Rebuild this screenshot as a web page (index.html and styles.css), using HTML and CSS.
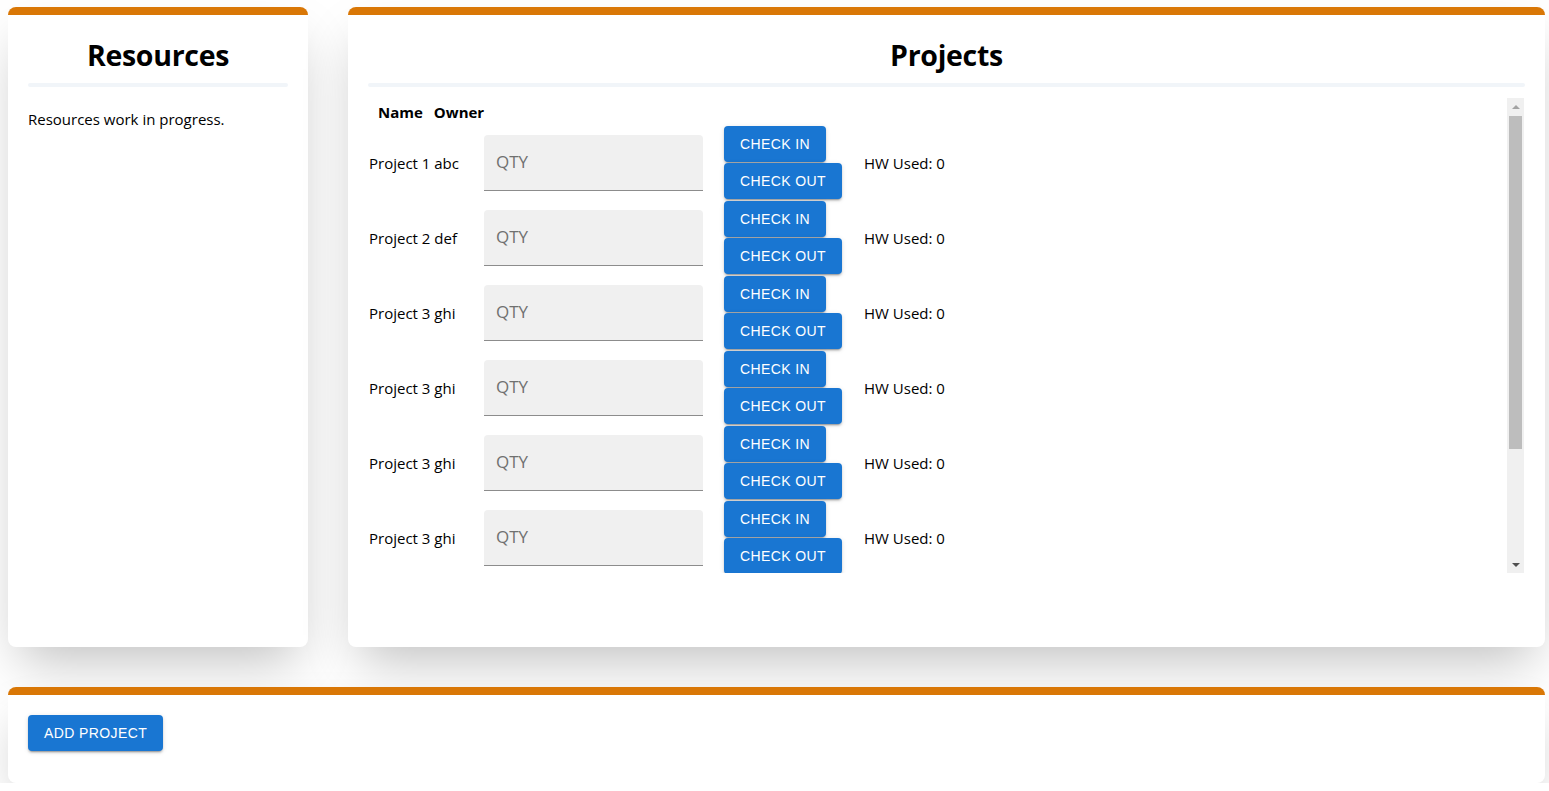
FILE: index.html
```html
<!DOCTYPE html>
<html>
<head>
<meta charset="utf-8">
<link rel="stylesheet" href="styles.css">
</head>
<body>
<div class="page">
  <div class="top-row">
    <section class="card card-resources">
      <h1 class="card-title">Resources</h1>
      <div class="divider"></div>
      <p class="wip">Resources work in progress.</p>
    </section>
    <section class="card card-projects">
      <h1 class="card-title">Projects</h1>
      <div class="divider"></div>
      <div class="scroll-wrap">
        <div class="scroller">
          <div class="head-row"><span>Name</span><span>Owner</span></div>
          <div class="row">
            <div class="name">Project 1 abc</div>
            <div class="field"><span class="ph">QTY</span></div>
            <div class="btns"><button class="btn">Check in</button><button class="btn">Check out</button></div>
            <div class="hw">HW Used: 0</div>
          </div>
          <div class="row">
            <div class="name">Project 2 def</div>
            <div class="field"><span class="ph">QTY</span></div>
            <div class="btns"><button class="btn">Check in</button><button class="btn">Check out</button></div>
            <div class="hw">HW Used: 0</div>
          </div>
          <div class="row">
            <div class="name">Project 3 ghi</div>
            <div class="field"><span class="ph">QTY</span></div>
            <div class="btns"><button class="btn">Check in</button><button class="btn">Check out</button></div>
            <div class="hw">HW Used: 0</div>
          </div>
          <div class="row">
            <div class="name">Project 3 ghi</div>
            <div class="field"><span class="ph">QTY</span></div>
            <div class="btns"><button class="btn">Check in</button><button class="btn">Check out</button></div>
            <div class="hw">HW Used: 0</div>
          </div>
          <div class="row">
            <div class="name">Project 3 ghi</div>
            <div class="field"><span class="ph">QTY</span></div>
            <div class="btns"><button class="btn">Check in</button><button class="btn">Check out</button></div>
            <div class="hw">HW Used: 0</div>
          </div>
          <div class="row">
            <div class="name">Project 3 ghi</div>
            <div class="field"><span class="ph">QTY</span></div>
            <div class="btns"><button class="btn">Check in</button><button class="btn">Check out</button></div>
            <div class="hw">HW Used: 0</div>
          </div>
          <div class="row">
            <div class="name">Project 3 ghi</div>
            <div class="field"><span class="ph">QTY</span></div>
            <div class="btns"><button class="btn">Check in</button><button class="btn">Check out</button></div>
            <div class="hw">HW Used: 0</div>
          </div>
        </div>
        <div class="vbar" aria-hidden="true">
          <div class="vbar-btn"><span class="arrow-up"></span></div>
          <div class="vbar-track"><div class="vbar-thumb"></div></div>
          <div class="vbar-btn vbar-btn-down"><span class="arrow-down"></span></div>
        </div>
      </div>
    </section>
  </div>
  <section class="card card-bottom">
    <button class="btn btn-add">Add project</button>
  </section>
</div>
</body>
</html>
```
FILE: styles.css
```css
html, body {
  margin: 0;
  padding: 0;
  background: #ffffff;
}
body {
  font-family: "Open Sans", "Noto Sans", sans-serif;
  color: #000;
  overflow: hidden;
}
.page {
  padding: 7px 4px 0 8px;
  display: flex;
  flex-direction: column;
  gap: 40px;
}
.top-row {
  display: flex;
  gap: 40px;
  height: 640px;
}
.card {
  background: #fff;
  border-top: 8px solid #d97706;
  border-radius: 8px;
  box-shadow: 0 25px 50px -12px rgba(0, 0, 0, 0.25);
  padding: 0 20px 20px;
  box-sizing: border-box;
}
.card-resources {
  width: 300px;
  flex: none;
}
.card-projects {
  flex: 1;
  min-width: 0;
}
.card-title {
  margin: 0;
  padding: 20px 0 9px;
  font-size: 28.5px;
  font-weight: 700;
  line-height: 40px;
  text-align: center;
  letter-spacing: -0.3px;
}
.divider {
  height: 4px;
  margin-top: -1px;
  border-radius: 2px;
  background: #f1f5f9;
}
.wip {
  margin: 22px 0 0;
  font-size: 15px;
  line-height: 20px;
}
.scroll-wrap {
  position: relative;
  margin-top: 11px;
  height: 475px;
}
.scroller {
  height: 100%;
  overflow: hidden;
}
.vbar {
  position: absolute;
  top: 0;
  bottom: 0;
  right: 1px;
  width: 17px;
  background: #f0f0f0;
  display: flex;
  flex-direction: column;
}
.vbar-btn {
  height: 18px;
  display: flex;
  align-items: center;
  justify-content: center;
  flex: none;
}
.vbar-btn-down {
  height: 17px;
}
.arrow-up {
  width: 0;
  height: 0;
  border-left: 4px solid transparent;
  border-right: 4px solid transparent;
  border-bottom: 4px solid #a3a3a3;
}
.arrow-down {
  width: 0;
  height: 0;
  border-left: 4px solid transparent;
  border-right: 4px solid transparent;
  border-top: 4px solid #505050;
}
.vbar-track {
  flex: 1;
  padding: 0 2px;
}
.vbar-thumb {
  height: 333px;
  background: #bdbdbd;
}
.head-row {
  display: flex;
  gap: 11px;
  padding-left: 10px;
  height: 27px;
  align-items: center;
  font-size: 15px;
  font-weight: 700;
}
.row {
  display: flex;
  align-items: center;
  height: 75px;
}
.name {
  width: 115px;
  padding-left: 1px;
  font-size: 15px;
  flex: none;
}
.field {
  width: 219px;
  height: 56px;
  box-sizing: border-box;
  background: #f0f0f0;
  border-radius: 4px 4px 0 0;
  border-bottom: 1px solid #8c8c8c;
  display: flex;
  align-items: center;
  padding: 0 12px 2px;
  flex: none;
}
.ph {
  color: #707070;
  font-size: 17px;
}
.btns {
  align-self: flex-start;
  margin: 1px 0 0 21px;
  width: 140px;
  display: flex;
  flex-direction: column;
  align-items: flex-start;
  gap: 1px;
  flex: none;
}
.btn {
  font-family: "Liberation Sans", Arial, sans-serif;
  font-size: 14px;
  font-weight: 400;
  letter-spacing: 0.4px;
  text-transform: uppercase;
  color: #fff;
  background: #1976d2;
  border: none;
  border-radius: 4px;
  height: 36px;
  padding: 0 16px;
  box-shadow: 0 3px 1px -2px rgba(0,0,0,0.2), 0 2px 2px 0 rgba(0,0,0,0.14), 0 1px 5px 0 rgba(0,0,0,0.12);
  line-height: 36px;
}
.hw {
  font-size: 15px;
}
.card-bottom {
  height: 96px;
  padding-top: 20px;
}
.btn-add {
  height: 36px;
}
```
